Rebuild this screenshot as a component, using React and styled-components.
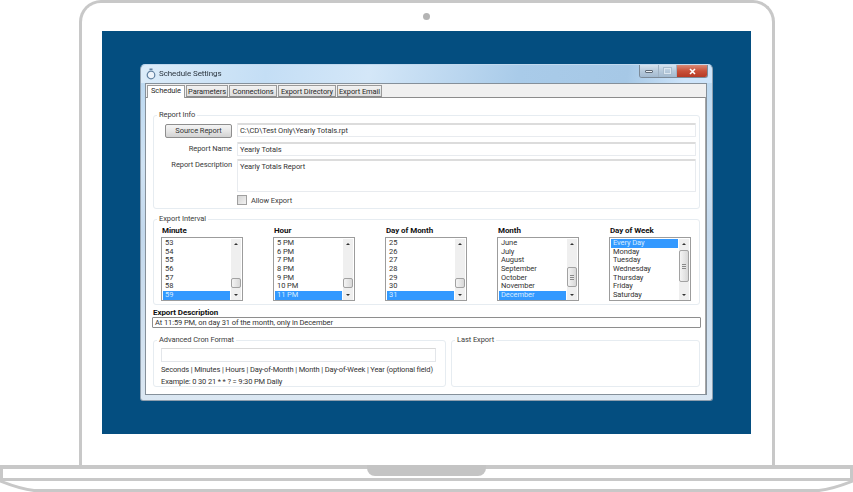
import React from "react";
import styled, { createGlobalStyle } from "styled-components";

const GlobalStyle = createGlobalStyle`
    html, body {
        margin: 0;
        padding: 0;
        background: #fff;
        overflow: hidden;
    }
    #root {
        width: 853px;
        height: 492px;
        overflow: hidden;
    }
`;

const Page = styled.div`
    width: 853px;
    height: 492px;
    display: flex;
    flex-direction: column;
    font-family: Roboto, "Liberation Sans", sans-serif;
    letter-spacing: -0.08px;
`;

const Lid = styled.div`
    box-sizing: border-box;
    width: 696px;
    height: 465px;
    margin-left: 79px;
    padding: 28px 20px 0;
    border: 3px solid #c8c8c8;
    border-bottom: none;
    border-radius: 22px 22px 0 0;
    position: relative;
`;

const Camera = styled.div`
    position: absolute;
    top: 10px;
    left: 341px;
    width: 7px;
    height: 7px;
    border-radius: 50%;
    background: #b4b4b4;
`;

const Screen = styled.div`
    box-sizing: border-box;
    width: 649px;
    height: 403px;
    padding: 33px 38px 0;
    background: #044e80;
`;

const Base = styled.div`
    position: relative;
    height: 27px;
`;

const BaseTop = styled.div`
    box-sizing: border-box;
    height: 16px;
    border: 3px solid #c8c8c8;
    border-top-width: 4px;
    border-bottom-width: 3px;
`;

const Notch = styled.div`
    position: absolute;
    top: 0;
    left: 367px;
    width: 119px;
    height: 11px;
    background: #c4c4c4;
    border-radius: 0 0 8px 8px;
`;

const BaseCurve = styled.svg`
    display: block;
    width: 853px;
    height: 11px;
`;

const Window = styled.div`
    box-sizing: border-box;
    width: 573px;
    height: 337px;
    padding: 0 5px 5px 4px;
    display: flex;
    flex-direction: column;
    border-radius: 5px 5px 3px 3px;
    border: 1px solid #8f9fae;
    border-top-color: #c0d8ee;
    background: linear-gradient(180deg, #b9d7f0 0%, #cfe2f3 30%, #c3d8ec 50%, #dbe7f2 100%);
    filter: blur(0.35px);
`;

const TitleBar = styled.div`
    height: 18px;
    flex: none;
    display: flex;
    align-items: flex-start;
    margin: 0 -5px 0 -4px;
    padding-left: 5px;
    border-radius: 5px 5px 0 0;
    background: linear-gradient(100deg, #dcecf9 0%, #c4def5 22%, #d4e7f8 40%, #a9cbe9 66%, #a6c8e6 85%, #cde4fa 95%);
`;

const TitleIcon = styled.svg`
    width: 10px;
    height: 12px;
    margin-top: 3px;
    flex: none;
`;

const TitleText = styled.div`
    margin: 3px 0 0 3px;
    font-size: 8px;
    line-height: 12px;
    color: #2c3640;
    flex: 1;
`;

const Controls = styled.div`
    display: flex;
    height: 12px;
    margin-right: 4px;
    border: 1px solid #7c8a98;
    border-top: none;
    border-radius: 0 0 3px 3px;
    overflow: hidden;
`;

const ControlButton = styled.div`
    width: ${(p) => p.$width}px;
    display: flex;
    align-items: center;
    justify-content: center;
    color: #fff;
    border-left: ${(p) => (p.$first ? "none" : "1px solid #9fb2c4")};
    background: ${(p) =>
        p.$close
            ? "linear-gradient(180deg, #d98a76 0%, #c9513a 50%, #b63a25 100%)"
            : "linear-gradient(180deg, #d5e2ee 0%, #b7cadc 50%, #a3bad0 100%)"};
`;

const MinIcon = styled.div`
    width: 6px;
    height: 1px;
    background: #eef2f6;
    border: 1px solid #5f6b78;
    border-radius: 1px;
`;

const MaxIcon = styled.div`
    width: 5px;
    height: 4px;
    border: 1px solid #dbe6f0;
    box-shadow: 0 0 0 1px #a9bccd;
`;

const CloseIcon = styled.svg`
    width: 7px;
    height: 7px;
`;

const Frame = styled.div`
    flex: 1;
    display: flex;
    flex-direction: column;
    border: 1px solid #85909a;
    background: #f0f0f0;
    min-height: 0;
`;

const TabRow = styled.div`
    height: 13px;
    flex: none;
    display: flex;
    align-items: flex-end;
    padding-left: 1px;
    gap: 1px;
`;

const Tab = styled.div`
    box-sizing: border-box;
    width: ${(p) => p.$width}px;
    height: ${(p) => (p.$active ? "13px" : "12px")};
    margin-bottom: ${(p) => (p.$active ? "-1px" : "0")};
    text-align: center;
    font-size: 7.5px;
    line-height: ${(p) => (p.$active ? "9px" : "11px")};
    color: #2a2a2a;
    white-space: nowrap;
    position: relative;
    border: 1px solid #9a9a9a;
    border-bottom: ${(p) => (p.$active ? "none" : "1px solid #8c8c8c")};
    background: ${(p) => (p.$active ? "#fff" : "linear-gradient(180deg, #f2f2f2, #dedede)")};
`;

const Panel = styled.div`
    box-sizing: border-box;
    flex: 1;
    padding: 17px 5px 0 7px;
    background: #fff;
    border-top: 1px solid #8c8c8c;
    border-right: 1px solid #a5a5a5;
    display: flex;
    flex-direction: column;
`;

const Group = styled.div`
    box-sizing: border-box;
    position: relative;
    flex: none;
    width: ${(p) => p.$width || "auto"};
    height: ${(p) => p.$height}px;
    margin-bottom: ${(p) => p.$gap || 0}px;
    border: 1px solid #e6ecf1;
    border-radius: 3px;
`;

const Legend = styled.div`
    position: absolute;
    top: -6px;
    left: 3px;
    padding: 0 2px;
    background: #fff;
    font-size: 7.5px;
    line-height: 10px;
    color: #3c3c3c;
    white-space: nowrap;
`;

const ReportGrid = styled.div`
    display: grid;
    grid-template-columns: 78px 459px;
    grid-template-rows: 15px 13px 33px 12px;
    row-gap: 4px;
    column-gap: 5px;
    padding: 7px 0 0 0;
`;

const SourceButton = styled.div`
    box-sizing: border-box;
    margin: 1px 0 0 11px;
    width: 67px;
    height: 14px;
    font-size: 7.5px;
    line-height: 12px;
    text-align: center;
    color: #333;
    border: 1px solid #8e8e8e;
    border-radius: 2px;
    background: linear-gradient(180deg, #f4f4f4 0%, #e6e6e6 50%, #d2d2d2 100%);
`;

const FieldLabel = styled.div`
    font-size: 7.5px;
    line-height: ${(p) => p.$line}px;
    text-align: right;
    color: #3a3a3a;
    white-space: nowrap;
`;

const Field = styled.div`
    box-sizing: border-box;
    height: ${(p) => p.$height}px;
    padding: 0 2px;
    font-size: 7.5px;
    line-height: 11px;
    color: #333;
    border: 1px solid #e8ebef;
    border-top: 2px solid #dcdcdc;
    border-radius: 1px;
`;

const CheckRow = styled.div`
    grid-column: 2;
    height: 10px;
    margin-top: -1px;
    display: flex;
    align-items: center;
    gap: 4px;
    font-size: 7.5px;
    color: #3a3a3a;
`;

const CheckBox = styled.div`
    width: 8px;
    height: 8px;
    border: 1px solid #a0a0a0;
    background: linear-gradient(135deg, #d4d4d4, #f2f2f2);
`;

const ColumnRow = styled.div`
    display: flex;
    gap: 30px;
    padding: 5px 0 0 7px;
`;

const Column = styled.div`
    width: 82px;
`;

const ColumnTitle = styled.div`
    height: 12px;
    padding-left: 1px;
    font-size: 8px;
    line-height: 12px;
    font-weight: 700;
    color: #111;
    white-space: nowrap;
`;

const ListBox = styled.div`
    box-sizing: border-box;
    height: 64px;
    display: flex;
    padding: 1px 1px 0;
    border: 1px solid #9c9c9c;
    background: #fff;
`;

const Items = styled.div`
    flex: 1;
    overflow: hidden;
`;

const Item = styled.div`
    height: 8.7px;
    padding-left: 2px;
    margin-right: 1px;
    font-size: 7.5px;
    line-height: 8.7px;
    white-space: nowrap;
    color: ${(p) => (p.$selected ? "#d8ecff" : "#333")};
    background: ${(p) => (p.$selected ? "#3399ff" : "transparent")};
`;

const Scrollbar = styled.div`
    width: 10px;
    flex: none;
    display: flex;
    flex-direction: column;
    align-items: center;
    background: #efefef;
`;

const ArrowSlot = styled.div`
    height: 10px;
    flex: none;
    display: flex;
    align-items: center;
    justify-content: center;
`;

const Arrow = styled.div`
    width: 0;
    height: 0;
    border-left: 2px solid transparent;
    border-right: 2px solid transparent;
    border-bottom: ${(p) => (p.$down ? "none" : "2.5px solid #333")};
    border-top: ${(p) => (p.$down ? "2.5px solid #333" : "none")};
`;

const Track = styled.div`
    flex: 1;
    align-self: stretch;
    display: flex;
    flex-direction: column;
`;

const Thumb = styled.div`
    box-sizing: border-box;
    width: 10px;
    height: ${(p) => p.$height}px;
    margin-top: ${(p) => p.$top}px;
    border: 1px solid #a2a2a2;
    border-radius: 2px;
    background: linear-gradient(90deg, #f4f4f4, #d8d8d8);
    display: flex;
    align-items: center;
    justify-content: center;
`;

const Grip = styled.div`
    width: 4px;
    height: 5px;
    background: repeating-linear-gradient(180deg, #8a8a8a 0 1px, #e8e8e8 1px 2px);
`;

const DescriptionTitle = styled.div`
    height: 10px;
    margin-top: 2px;
    font-size: 8px;
    line-height: 12px;
    font-weight: 700;
    color: #111;
`;

const DescriptionBox = styled.div`
    box-sizing: border-box;
    height: 11px;
    margin: 0 -1px 12px;
    padding-left: 2px;
    font-size: 7.5px;
    line-height: 9px;
    color: #333;
    border: 1px solid #8e8e8e;
    border-radius: 1px;
`;

const BottomRow = styled.div`
    display: flex;
    gap: 5px;
`;

const CronBody = styled.div`
    padding: 7px 0 0 7px;
`;

const CronInput = styled.div`
    box-sizing: border-box;
    width: 275px;
    height: 14px;
    margin-bottom: 2px;
    border: 1px solid #e3e6ea;
    border-top-color: #d9d9d9;
`;

const CronLine = styled.div`
    font-size: 7.5px;
    line-height: 11.5px;
    letter-spacing: -0.13px;
    color: #333;
    white-space: nowrap;
`;

const range = (from, to) => {
    const out = [];
    for (let i = from; i <= to; i++) out.push(String(i));
    return out;
};

const columns = [
    { title: "Minute", items: range(53, 59), selected: 6, thumbTop: 29, thumbHeight: 10 },
    {
        title: "Hour",
        items: ["5 PM", "6 PM", "7 PM", "8 PM", "9 PM", "10 PM", "11 PM"],
        selected: 6,
        thumbTop: 29,
        thumbHeight: 10,
    },
    { title: "Day of Month", items: range(25, 31), selected: 6, thumbTop: 29, thumbHeight: 10 },
    {
        title: "Month",
        items: ["June", "July", "August", "September", "October", "November", "December"],
        selected: 6,
        thumbTop: 18,
        thumbHeight: 20,
        grip: true,
    },
    {
        title: "Day of Week",
        items: ["Every Day", "Monday", "Tuesday", "Wednesday", "Thursday", "Friday", "Saturday"],
        selected: 0,
        thumbTop: 1,
        thumbHeight: 32,
        grip: true,
    },
];

const tabs = [
    { label: "Schedule", width: 38, active: true },
    { label: "Parameters", width: 42 },
    { label: "Connections", width: 48 },
    { label: "Export Directory", width: 58 },
    { label: "Export Email", width: 45 },
];

const App = () => {
    return (
        <Page>
            <GlobalStyle />
            <Lid>
                <Camera />
                <Screen>
                    <Window>
                        <TitleBar>
                            <TitleIcon viewBox="0 0 10 12">
                                <circle cx="5" cy="7" r="3.8" fill="#eef4fa" stroke="#5f7f9f" strokeWidth="1.2" />
                                <rect x="3.5" y="0.5" width="3" height="1.5" fill="#5f7f9f" />
                            </TitleIcon>
                            <TitleText>Schedule Settings</TitleText>
                            <Controls>
                                <ControlButton $first $width={18}>
                                    <MinIcon />
                                </ControlButton>
                                <ControlButton $width={17}>
                                    <MaxIcon />
                                </ControlButton>
                                <ControlButton $close $width={30}>
                                    <CloseIcon viewBox="0 0 7 7">
                                        <path d="M1 1 L6 6 M6 1 L1 6" stroke="#fff" strokeWidth="1.6" />
                                    </CloseIcon>
                                </ControlButton>
                            </Controls>
                        </TitleBar>
                        <Frame>
                            <TabRow>
                                {tabs.map((tab) => (
                                    <Tab key={tab.label} $width={tab.width} $active={tab.active}>
                                        {tab.label}
                                    </Tab>
                                ))}
                            </TabRow>
                            <Panel>
                                <Group $height={94} $gap={10}>
                                    <Legend>Report Info</Legend>
                                    <ReportGrid>
                                        <SourceButton>Source Report</SourceButton>
                                        <Field $height={14}>C:\CD\Test Only\Yearly Totals.rpt</Field>
                                        <FieldLabel $line={13}>Report Name</FieldLabel>
                                        <Field $height={14}>Yearly Totals</Field>
                                        <FieldLabel $line={11}>Report Description</FieldLabel>
                                        <Field $height={33}>Yearly Totals Report</Field>
                                        <CheckRow>
                                            <CheckBox />
                                            Allow Export
                                        </CheckRow>
                                    </ReportGrid>
                                </Group>
                                <Group $height={86}>
                                    <Legend>Export Interval</Legend>
                                    <ColumnRow>
                                        {columns.map((col) => (
                                            <Column key={col.title}>
                                                <ColumnTitle>{col.title}</ColumnTitle>
                                                <ListBox>
                                                    <Items>
                                                        {col.items.map((item, i) => (
                                                            <Item key={item} $selected={i === col.selected}>
                                                                {item}
                                                            </Item>
                                                        ))}
                                                    </Items>
                                                    <Scrollbar>
                                                        <ArrowSlot>
                                                            <Arrow />
                                                        </ArrowSlot>
                                                        <Track>
                                                            <Thumb $top={col.thumbTop} $height={col.thumbHeight}>
                                                                {col.grip && <Grip />}
                                                            </Thumb>
                                                        </Track>
                                                        <ArrowSlot>
                                                            <Arrow $down />
                                                        </ArrowSlot>
                                                    </Scrollbar>
                                                </ListBox>
                                            </Column>
                                        ))}
                                    </ColumnRow>
                                </Group>
                                <DescriptionTitle>Export Description</DescriptionTitle>
                                <DescriptionBox>At 11:59 PM, on day 31 of the month, only in December</DescriptionBox>
                                <BottomRow>
                                    <Group $width="293px" $height={47}>
                                        <Legend>Advanced Cron Format</Legend>
                                        <CronBody>
                                            <CronInput />
                                            <CronLine>
                                                Seconds | Minutes | Hours | Day-of-Month | Month | Day-of-Week | Year (optional field)
                                            </CronLine>
                                            <CronLine>Example: 0 30 21 * * ? = 9:30 PM Daily</CronLine>
                                        </CronBody>
                                    </Group>
                                    <Group $width="249px" $height={47}>
                                        <Legend>Last Export</Legend>
                                    </Group>
                                </BottomRow>
                            </Panel>
                        </Frame>
                    </Window>
                </Screen>
            </Lid>
            <Base>
                <BaseTop />
                <Notch />
                <BaseCurve viewBox="0 0 853 11">
                    <path
                        d="M0 0 C10 4 20 8 34 9.5 H819 C833 8 843 4 853 0"
                        fill="none"
                        stroke="#c8c8c8"
                        strokeWidth="3"
                    />
                </BaseCurve>
            </Base>
        </Page>
    );
};

export default App;
